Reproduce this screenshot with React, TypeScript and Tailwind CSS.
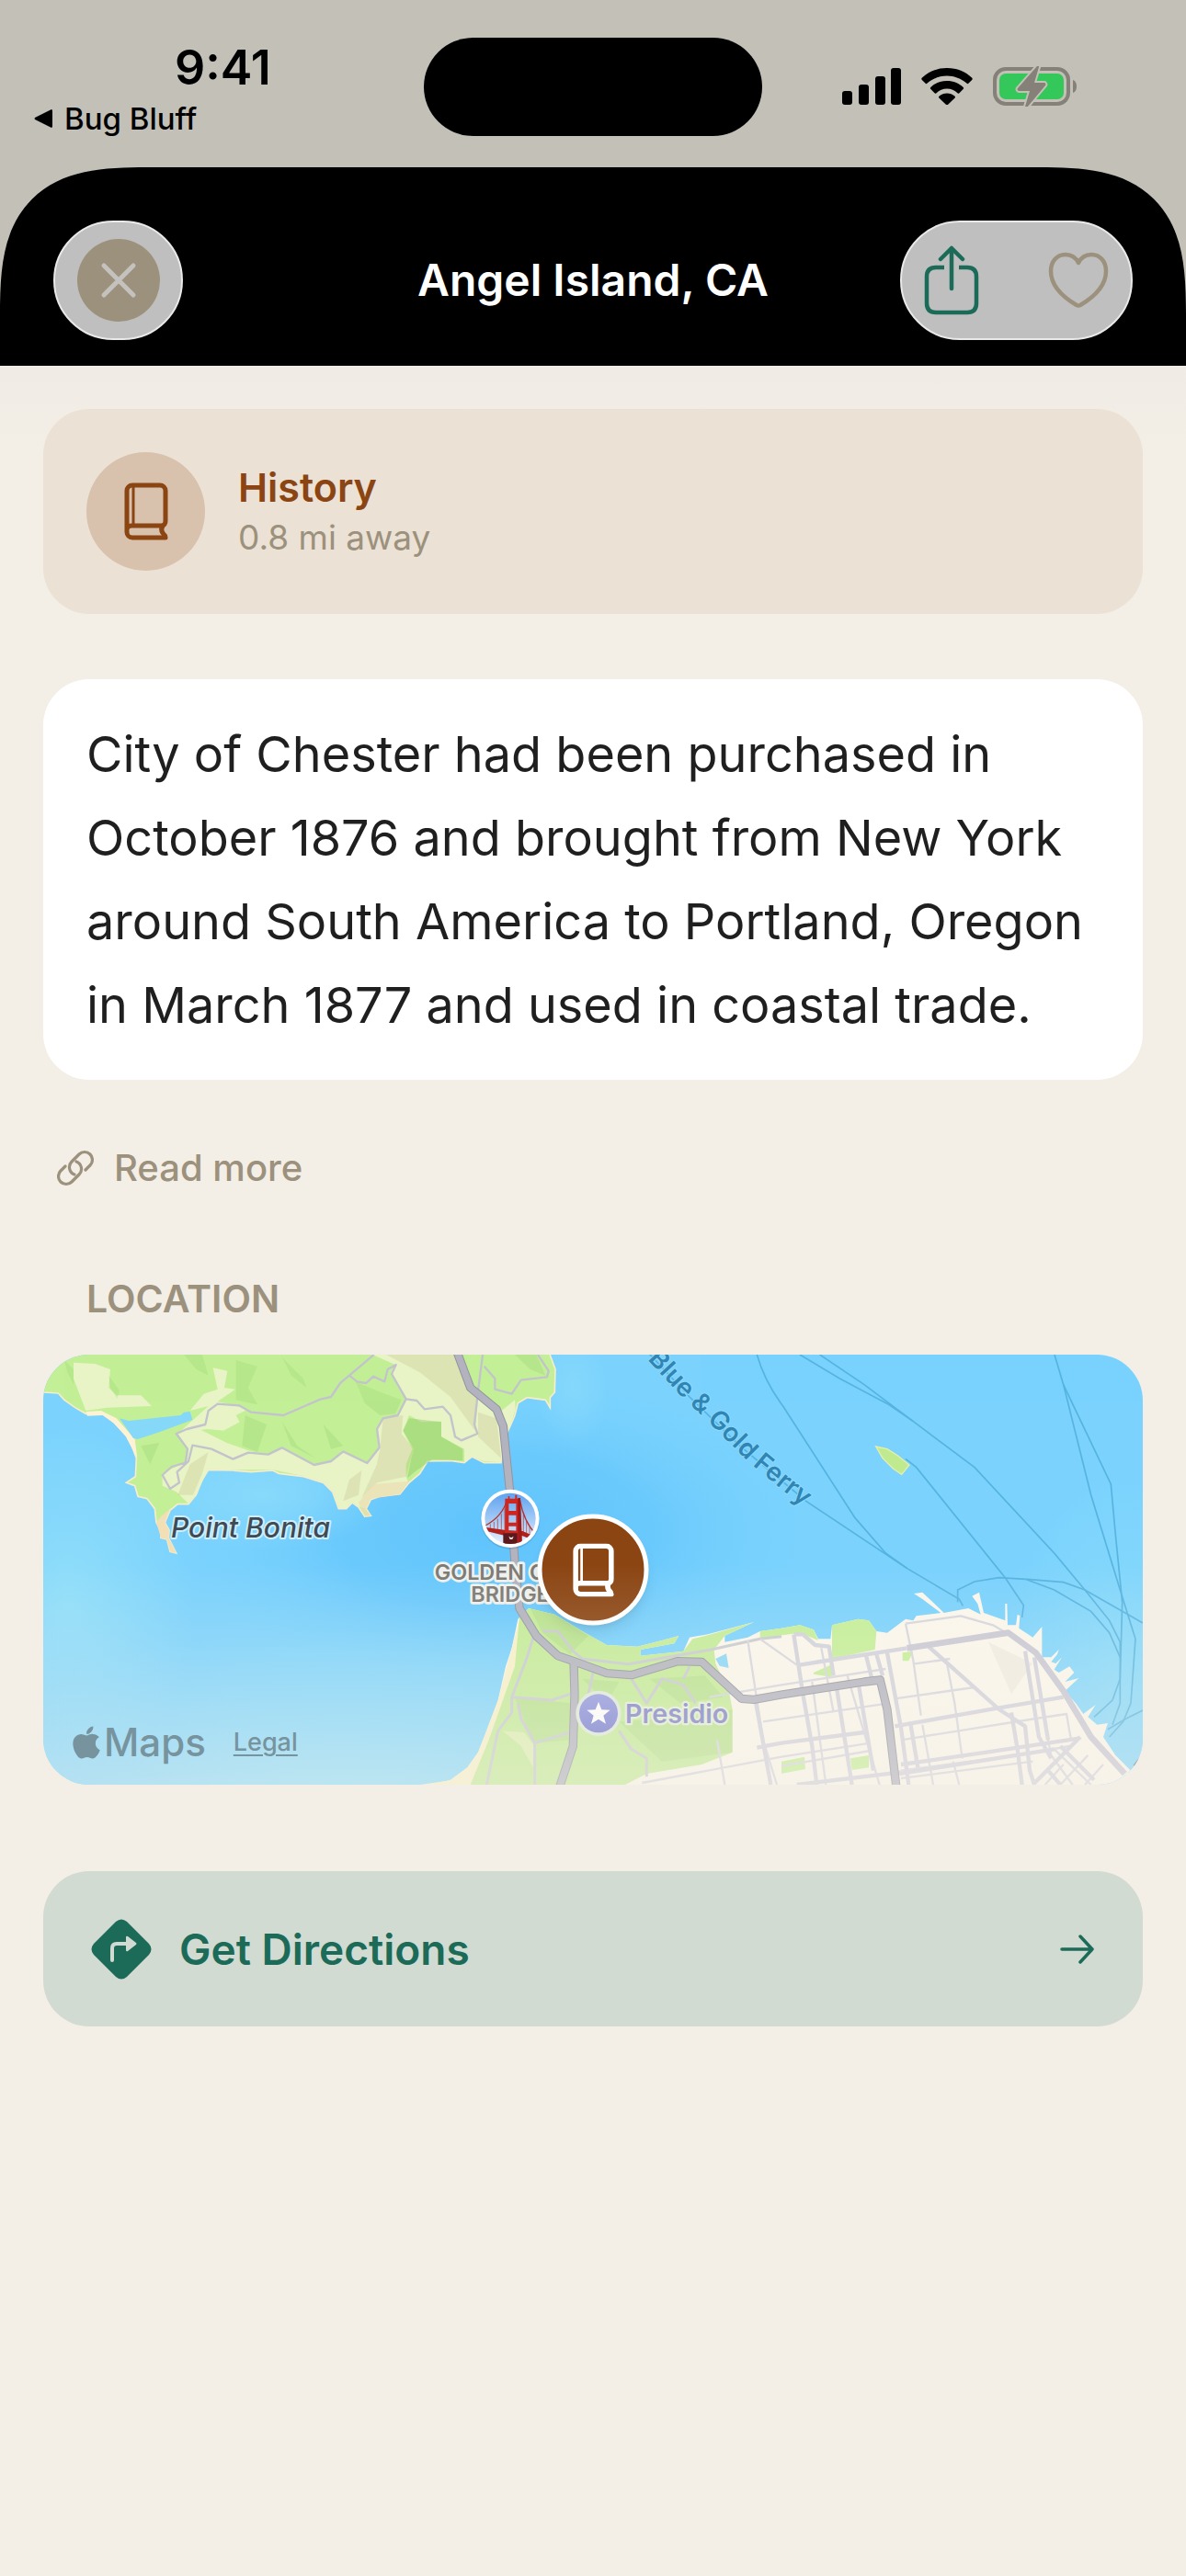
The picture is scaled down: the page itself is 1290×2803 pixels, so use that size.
import type { ReactNode } from "react";
import { FaApple } from "react-icons/fa";

const BookIcon = ({ className }: { className?: string }) => (
  <svg viewBox="0 0 48 63" fill="none" stroke="currentColor" className={className} aria-hidden="true">
    <path
      d="M45 60H9a6 6 0 0 1-6-6V9a6 6 0 0 1 6-6h30a6 6 0 0 1 6 6v33c0 2-1 4-3 5-2 3-2 5 0 8 1 1 3 2 3 5Z"
      strokeLinejoin="round"
    />
    <path d="M3 50c1-2 3-3 5-3h36" />
    <path d="M10 4v42" strokeWidth="3" />
  </svg>
);

const SignalIcon = () => (
  <svg viewBox="0 0 64 40" className="h-10 w-16" aria-hidden="true">
    <rect x="0" y="25" width="11" height="15" rx="3" />
    <rect x="18" y="18" width="11" height="22" rx="3" />
    <rect x="36" y="9" width="11" height="31" rx="3" />
    <rect x="53" y="0" width="11" height="40" rx="3" />
  </svg>
);

const WifiIcon = () => (
  <svg viewBox="0 0 56 40" className="h-10 w-14" aria-hidden="true">
    <path d="M28 0c11 0 20 4 27 10.5 1 1 1 1.5.2 2.4l-3.6 3.7c-.8.8-1.4.7-2.2 0C43.500 11.500 36 8.500 28 8.500s-15.500 3-21.400 8.100c-.8.7-1.4.8-2.2 0L.8 12.9C0 12 0 11.500 1 10.500 8 4 17 0 28 0Z" />
    <path d="M28 14c7 0 13 2.5 17.5 6.8.9.9.9 1.5.1 2.3l-3.9 4c-.8.8-1.4.8-2.2.1C36.500 24.500 32.500 22.500 28 22.500s-8.500 2-11.500 4.700c-.8.7-1.4.7-2.2-.1l-3.9-4c-.8-.8-.8-1.4.1-2.3C15 16.500 21 14 28 14Z" />
    <path d="M28 27.5c3.2 0 6 1.1 8.3 3 .9.8.9 1.5.1 2.3l-7 6.6c-.9.8-1.9.8-2.8 0l-7-6.6c-.8-.8-.8-1.5.1-2.3 2.3-1.9 5.1-3 8.3-3Z" />
  </svg>
);

const BatteryIcon = () => (
  <svg viewBox="0 0 92 44" className="h-11 w-[92px]" aria-hidden="true">
    <rect x="2" y="3" width="80" height="38" rx="12" fill="none" stroke="#858078" strokeWidth="4" />
    <rect x="7" y="8" width="70" height="28" rx="7" fill="#34c759" />
    <path d="M87 15c3 1 4 4 4 7s-1 6-4 7Z" fill="#858078" />
    <path
      d="M48 0 27 24c-1 1 0 3 1 3h12l-5 17c0 2 1 2 2 1l20-24c1-1 0-3-1-3H45l5-17c0-2-1-2-2-1Z"
      fill="#858078"
      stroke="#c3c0b8"
      strokeWidth="4"
      paintOrder="stroke"
    />
  </svg>
);

const ShareIcon = () => (
  <svg viewBox="0 0 60 76" fill="none" stroke="currentColor" className="h-[76px] w-[60px]" strokeWidth="4.5" strokeLinecap="round" strokeLinejoin="round" aria-hidden="true">
    <path d="M30 47V3M18 15 30 3l12 12" />
    <path d="M22 24h-9C6 24 3 28 3 34v29c0 6 3 10 10 10h34c7 0 10-4 10-10V34c0-6-3-10-10-10h-9" strokeLinecap="butt" />
  </svg>
);

const HeartIcon = () => (
  <svg viewBox="0 0 66 62" fill="none" stroke="currentColor" className="h-[62px] w-[66px]" strokeWidth="4.5" strokeLinejoin="round" aria-hidden="true">
    <path d="M33 12C30 6 25 3 19 3 9 3 3 11 3 21c0 14 11 27 28 37q2 1 4 0c17-10 28-23 28-37C63 11 57 3 47 3c-6 0-11 3-14 9Z" />
  </svg>
);

const LinkIcon = () => (
  <svg viewBox="0 0 40 40" fill="none" stroke="currentColor" className="size-10" strokeWidth="3.2" strokeLinecap="round" aria-hidden="true">
    <path d="M9 18 4 23a8.500 8.500 0 0 0 0 12 8.500 8.500 0 0 0 12 0l8-8a8.500 8.500 0 0 0-3-14" />
    <path d="m31 22 5-5a8.500 8.500 0 0 0 0-12 8.500 8.500 0 0 0-12 0l-8 8a8.500 8.500 0 0 0 3 14" />
  </svg>
);

const TurnIcon = () => (
  <svg viewBox="0 0 66 66" className="size-[66px]" aria-hidden="true">
    <path d="M27 3q6-5 12 0l24 24q5 6 0 12L39 63q-6 5-12 0L3 39q-5-6 0-12Z" fill="#1b6b58" />
    <path d="M23 45V32q0-5 5-5h11" fill="none" stroke="#d2dbd1" strokeWidth="4" strokeLinecap="round" />
    <path d="M38 20q0-2 2-1l9 7q1 1 0 2l-9 7q-2 1-2-1Z" fill="#d2dbd1" />
  </svg>
);

const ArrowIcon = () => (
  <svg viewBox="0 0 38 32" fill="none" stroke="#1b6b58" className="h-8 w-[38px]" strokeWidth="3.5" strokeLinecap="round" strokeLinejoin="round" aria-hidden="true">
    <path d="M2 16h33M22 2l13 14-13 14" />
  </svg>
);

const highway =
  "M1370 30 1415 150 1500 220 1522 275 1543 480 1560 720 1575 870 1630 960 1700 1025 1750 1042 1860 1082 1940 1088 2090 1043 2170 1045 2300 1165 2340 1168 2430 1152 2700 1110 2752 1104 2775 1200 2805 1456M1752 1045 1755 1150 1750 1320 1705 1456";

const MapArt = () => (
  <svg viewBox="21 42 3588 1404" preserveAspectRatio="xMidYMid slice" className="absolute inset-0 size-full font-[Inter,sans-serif]" role="img" aria-label="Map of the Golden Gate">
    <defs>
      <radialGradient id="deep">
        <stop offset="0" stopColor="#5fc3fc" />
        <stop offset="0.5" stopColor="#64c6fc" stopOpacity="0.7" />
        <stop offset="1" stopColor="#78d1fd" stopOpacity="0" />
      </radialGradient>
      <radialGradient id="shallow">
        <stop offset="0" stopColor="#90defa" />
        <stop offset="1" stopColor="#90defa" stopOpacity="0" />
      </radialGradient>
      <linearGradient id="sky" x1="0" y1="0" x2="0" y2="1">
        <stop offset="0" stopColor="#5aa0ef" />
        <stop offset="1" stopColor="#e4f0fd" />
      </linearGradient>
      <linearGradient id="park" x1="0" y1="0" x2="0" y2="1">
        <stop offset="0" stopColor="#9299e0" />
        <stop offset="1" stopColor="#6f78cf" />
      </linearGradient>
      <clipPath id="photo">
        <circle cx="1545" cy="577" r="83" />
      </clipPath>
      <path id="ferryLabel" d="M1992 58 2095 170 2185 255 2320 390 2440 490 2580 600" />
    </defs>

    {/* water */}
    <path d="M21 42h3588v1404H21Z" fill="#7ad2fd" />
    <ellipse cx="1500" cy="620" rx="1050" ry="520" fill="url(#deep)" />
    <ellipse cx="100" cy="850" rx="420" ry="600" fill="url(#shallow)" />
    <ellipse cx="740" cy="500" rx="420" ry="180" fill="url(#shallow)" opacity="0.7" />
    <ellipse cx="1000" cy="1500" rx="1400" ry="560" fill="url(#shallow)" />
    <ellipse cx="1750" cy="150" rx="120" ry="200" fill="url(#shallow)" opacity="0.5" />
    <ellipse cx="3550" cy="1100" rx="420" ry="700" fill="url(#shallow)" opacity="0.7" />

    {/* ferry routes */}
    <g fill="none" stroke="#4aa9d6" strokeWidth="5" opacity="0.75">
      <path d="M2350 42Q2375 130 2435 210L2670 575 2770 690 2840 740" />
      <path d="M1990 30 2130 180 2300 345 2510 520 2840 740 3010 840 3022 862" />
      <path d="M2490 42 2620 120 2780 205 2860 260 3060 410 3320 690 3420 810 3500 910 3535 980V1180L3510 1250" />
      <path d="M2555 42 2700 140 2860 260" />
      <path d="M2835 382 2870 410 3160 770 3220 860 3215 900" />
      <path d="M3005 850V810L3060 783 3140 770 3240 776 3350 785 3420 810 3609 918" />
      <path d="M3230 776 3320 810 3440 880 3500 950 3535 1030" />
      <path d="M3321 42 3350 140 3440 500 3535 810 3560 890 3585 970 3570 1180 3545 1240 3500 1290" />
      <path d="M3350 140 3505 465 3520 630 3542 850 3535 1100 3510 1170 3450 1225" />
      <path d="M3609 1203 3555 1230 3495 1265" />
    </g>

    {/* headlands */}
    <path
      d="M21 30V165L70 168 90 190 125 215 160 235H215L255 265 295 310 312 345 325 380 322 440 292 460 320 470 330 505 360 512 385 545 390 590 405 615V640L425 645 435 685 455 690 440 660 430 640 432 615 418 590 435 550 460 530H495L520 500 540 450 560 418 640 420 700 425 770 420 790 430 870 440 935 460 965 490 985 545H1010L1030 525 1050 540 1070 570 1090 568 1075 545 1090 515 1120 505 1185 497 1215 460 1250 430 1275 390 1350 388 1395 395 1420 375 1460 395H1515L1520 330 1545 275 1560 240 1570 200 1600 182 1660 190 1675 215V182L1690 165 1692 90 1670 30Z"
      fill="#c3ef97"
      stroke="#f7eccb"
      strokeWidth="5"
    />
    <g fill="#e8f3c6">
      <path d="M120 68 190 72 240 90 235 150 260 175H340L375 210 230 215 160 225 120 120Z" />
      <path d="M575 85 622 95 612 150 648 155 590 195 690 220 650 240 662 262 610 290 555 285 460 300 560 210 500 225 545 170 590 155Z" />
      <path d="M460 300 530 285 620 330 690 355 750 370 800 345 900 400 960 390 1000 355 1078 395 1115 350 1110 290 1130 250 1180 240 1205 185 1155 100 1170 75 1095 42H1370L1420 150 1510 230 1560 190 1562 220 1545 275 1520 330 1515 393 1460 390 1420 375 1395 393V350L1320 310V260L1255 262 1215 240 1195 290 1225 350 1205 400V440L1212 458 1185 495 1120 503 1090 513 1075 545 1050 538 1030 523 1010 543H987L967 490 937 458 870 438 770 418 640 418 560 416 520 498 495 528 455 490 410 470V430L490 390 495 350Z" />
    </g>
    <g fill="#b3a86f" opacity="0.2">
      <path d="M1130 250 1195 240 1190 300 1230 350 1205 440 1110 460 1060 510 1110 400 1120 350Z" />
      <path d="M1140 42H1370L1410 130 1440 180 1430 290 1350 180 1250 100Z" />
      <path d="M1440 230 1500 250 1515 380 1440 310Z" />
      <path d="M500 400 560 360 540 430 510 500 460 500Z" />
      <path d="M1020 450 1060 420 1050 500 1000 520Z" />
    </g>
    <g fill="#7fbf5a" opacity="0.18">
      <path d="M90 60 120 90V140L100 100Z" />
      <path d="M235 110 270 160 262 185 240 150Z" />
      <path d="M480 42H540L560 110 520 90Z" />
      <path d="M650 60 720 80 690 150 720 205 650 190Z" />
      <path d="M800 50 870 120 880 150 830 110Z" />
      <path d="M680 240 750 270 720 360 670 340Z" />
      <path d="M800 260 850 340 910 380 830 340Z" />
      <path d="M935 270 1000 340 960 350Z" />
      <path d="M1040 130 1110 160 1190 190 1170 235 1120 240 1070 200Z" />
      <path d="M1560 42H1630L1660 110 1610 90Z" />
      <path d="M340 340 400 330 370 400Z" />
    </g>
    <g fill="#7fbf5a" opacity="0.35">
      <path d="M1215 250 1320 262V310L1390 350V388L1290 385 1210 440 1230 350 1195 290Z" />
      <path d="M1225 370 1260 360 1250 410 1210 445Z" />
    </g>
    <path d="M160 228 210 225 260 250 320 318 328 380 312 350 290 308 250 265 215 240 165 242Z" fill="#fdf3d4" />
    <path d="M390 590 405 570 435 545 418 590 432 615 430 640 455 690 435 685 425 645 405 640Z" fill="#f3dfb5" />
    <path d="M1050 525 1100 465 1215 455 1185 497 1090 513 1075 545 1090 568 1070 570Z" fill="#eeddb4" opacity="0.7" />
    <path d="M270 250 300 258 470 240 480 230 500 228 508 255 400 295 330 318 315 315Z" fill="#86d8f9" />

    {/* headland trails */}
    <g fill="none" stroke="#c3c4cb" strokeWidth="7" strokeLinejoin="round">
      <path d="M1100 42 1020 110 990 135 960 180 925 188 805 240 700 230 660 208 590 203 560 225 550 270 490 285 455 300 492 350 485 395 440 408 410 435 435 480 465 460 458 425 495 390 508 338 570 350 640 383 690 362 755 368 800 346 905 402 960 390 1000 358 1078 396 1118 345 1110 285 1130 250 1178 240 1205 187 1158 105 1172 75 1145 90 1135 130 1098 113 1075 135 1045 130 1020 110" />
      <path d="M1205 187 1240 192 1265 220 1325 212 1350 240 1365 310 1385 322 1438 300 1428 270 1440 160 1455 42" />
      <path d="M1460 80 1495 120V155L1550 170 1580 125 1665 115 1670 95 1635 42" />
    </g>

    {/* peninsula */}
    <path
      d="M1280 1446 1350 1430 1405 1390 1440 1340 1465 1280 1505 1170 1530 1060 1550 1000 1570 905 1605 870 1690 890 1780 945 1860 990 1960 995 2040 975 2095 960 2080 985 1970 1005V1025L2110 1010 2130 965 2190 955 2340 915 2245 960V980L2320 965 2360 945 2430 935 2490 925 2535 940 2550 970H2590L2595 925 2680 905 2715 910 2740 945 2775 950 2835 905 2860 910 2870 895 2950 885 2890 840 2862 822 2890 818 2945 870 2960 885 3040 870 3080 890 3070 855 3052 830 3075 818 3090 885 3160 910V855H3166L3168 925H3195L3200 890 3208 895 3205 935 3250 965 3280 930V1030H3310L3335 1005 3330 1020 3310 1045 3325 1050 3345 1030 3320 1070 3335 1080 3370 1060 3385 1080 3355 1110 3400 1098 3355 1140 3390 1180 3415 1215 3455 1185 3430 1225 3460 1250 3495 1245 3480 1290 3520 1350 3570 1400V1460H1280Z"
      fill="#fbf7ec"
    />
    <path d="M1250 1446 1350 1432 1405 1390 1440 1340 1505 1170 1550 1000 1575 905 1580 1000 1540 1130 1500 1240 1425 1446Z" fill="#f8f1c9" />
    <path d="M1575 900 1605 870 1690 890 1780 945 1860 990 1960 995 2040 975 2095 960 2080 985 1970 1005V1025L2110 1010 2140 970 2190 958 2340 915 2245 960 2210 1005 2215 1050 2260 1150 2270 1200V1340L2170 1380 1990 1410 1920 1446H1415L1475 1300 1560 1060Z" fill="#c4ec97" />
    <g fill="#c4ef97">
      <path d="M2360 945 2430 935 2490 925 2535 940 2550 975 2490 950 2360 968Z" />
      <path d="M2595 925 2680 905 2715 910 2740 945 2735 1005 2595 1035Z" />
      <path d="M2535 1080 2590 1055 2595 1095 2535 1085Z" />
      <path d="M2825 1015 2860 1010 2845 1042H2825Z" />
      <path d="M2430 1370 2505 1355 2508 1395 2430 1410Z" />
      <path d="M2655 1360 2715 1350V1390L2660 1398Z" />
    </g>
    <g fill="#8fc46d" opacity="0.2">
      <path d="M1610 870 1690 890 1800 960 1740 1020 1650 950Z" />
      <path d="M1560 1160 1740 1180V1300L1620 1310Z" />
      <path d="M1900 1240 2200 1220 2270 1200V1340L2040 1370Z" />
      <path d="M1780 1100 1900 1110 1860 1180Z" />
      <path d="M2000 1100 2180 1090 2240 1160 2100 1180Z" />
    </g>
    <path d="M2215 1035 2250 1018 2258 1065 2228 1058Z" fill="#8ad8f8" />
    <path d="M1520 1270 1590 1275 1625 1320 1620 1390 1580 1320Z" fill="#e4f0b8" opacity="0.8" />
    <path d="M3105 980 3250 1050 3180 1150Z" fill="#dcd8cb" opacity="0.3" />
    <path d="M3582 1385 3609 1350" stroke="#6d7a80" strokeWidth="10" />

    {/* park roads */}
    <g fill="none" stroke="#c9cbcf" strokeWidth="9" strokeLinejoin="round">
      <path d="M1620 965 1600 1030 1550 1160V1210L1505 1270 1468 1446" />
      <path d="M1650 945 1700 945 1750 1010 1780 1035 1930 1052 2200 1005 2360 970 2430 962" />
      <path d="M1550 1160 1680 1170 1740 1150M1570 1180 1580 1230 1625 1310V1446M1625 1310 1740 1275" />
      <path d="M1815 1080 1800 1150M1940 1100 1990 1180 2040 1100 2110 1120 2150 1180M2110 1100 2130 1060" />
      <path d="M1900 1270 1940 1330 1990 1360 1990 1420" />
    </g>

    {/* city streets */}
    <g fill="none" stroke="#d6d6dd" strokeWidth="7" strokeLinejoin="round">
      <path d="M2320 975 2370 1300 2415 1446M2360 970 2480 1055M2195 1160 2430 1120 2770 1068" />
      <path d="M2370 1240 2780 1180M1975 1440 2430 1355 2720 1310M2430 1385 2720 1335M2220 1300 2245 1446" />
      <path d="M2530 1110 2575 1446M2645 1090 2750 1446M2560 1000 2600 1210" />
      <path d="M2835 920 2860 1040 2885 1220M2970 1050 2995 1180 3020 1360M2800 1165 3060 1128M2860 1052 2980 1035" />
      <path d="M2835 920 3015 895 3120 925 3180 960M2820 1300 3260 1230 3360 1215 3375 1300" />
      <path d="M2820 1400 3200 1350 3370 1320M2820 1425 3250 1370M2890 1250 2925 1446M2990 1370 3010 1446" />
      <path d="M3290 1250 3310 1350 3380 1446M3320 1330 3440 1446M3350 1380 3290 1446M3430 1350 3340 1446M3480 1380 3420 1446" />
    </g>
    <g fill="none" stroke="#d2d2db" strokeWidth="13" strokeLinejoin="round">
      <path d="M2490 1055 2595 1038 2840 1000M2470 955 2500 1150 2530 1320 2545 1446M2470 955H2500L2540 990 2585 995 2600 1090" />
      <path d="M2430 1310 2700 1275M2350 1325 2430 1310M2345 1170 2395 1446M2610 1130 2660 1446M2680 1110 2730 1400" />
      <path d="M2705 1020 2725 1100M2740 1020 2760 1090M2775 1015 2820 1260 2845 1446M2850 1240 2875 1390" />
      <path d="M2800 1255 3140 1195 3350 1160M2820 1380 3100 1340 3400 1295M2815 1410 3320 1330M2480 1446 2820 1405" />
      <path d="M3180 1210 3200 1330 3215 1446M3225 1010 3270 1290 3310 1360M3255 1030 3300 1300" />
      <path d="M2910 995 3140 1200 3225 1255 3240 1400 3255 1446M3405 1290 3250 1446M3300 1400 3340 1446M3340 1320 3450 1430" />
    </g>
    <path d="M2840 1000 3170 950 3260 1015 3350 1140 3440 1290 3550 1410" fill="none" stroke="#c9c8d4" strokeWidth="20" strokeLinejoin="round" />

    {/* highway 101 */}
    <g fill="none" strokeLinejoin="round">
      <path d={highway} stroke="#93949f" strokeWidth="28" />
      <path d={highway} stroke="#b2b3be" strokeWidth="22" />
    </g>

    {/* Alcatraz */}
    <path d="M2738 342 2775 350 2810 372 2847 402 2822 433 2795 415 2760 380Z" fill="#bfea90" stroke="#e6efa8" strokeWidth="4" />

    {/* labels */}
    <g strokeLinejoin="round" paintOrder="stroke">
      <text x="438" y="640" fontSize="90" fontStyle="italic" fontWeight="500" fill="#3f4a55" stroke="#cdeefc" strokeWidth="12">
        Point Bonita
      </text>
      <text fontSize="84" fontWeight="600" fill="#2f86b4" stroke="#8fdafc" strokeWidth="6">
        <textPath href="#ferryLabel">Blue &amp; Gold Ferry</textPath>
      </text>
      <g fontSize="70" fontWeight="600" fill="#7d7a73" stroke="#eef1ee" strokeWidth="16" textAnchor="middle">
        <text x="1545" y="778">GOLDEN GATE</text>
        <text x="1545" y="848">BRIDGE</text>
      </g>
      <text x="1920" y="1245" fontSize="86" fontWeight="600" fill="#7c80c4" stroke="#e3efd8" strokeWidth="14">
        Presidio
      </text>
    </g>

    {/* bridge photo pin */}
    <circle cx="1545" cy="580" r="97" fill="#2c6fa5" opacity="0.25" />
    <circle cx="1545" cy="577" r="95" fill="#fff" />
    <g clipPath="url(#photo)">
      <path d="M1460 490h170v170h-170Z" fill="url(#sky)" />
      <g fill="none" stroke="#b5322c" strokeWidth="4">
        <path d="M1464 600Q1520 570 1535 515M1576 515Q1590 590 1630 630" />
        <path d="M1480 595v20M1492 588v30M1504 578v40M1516 562v60M1527 545v80M1588 565v65M1598 585v50M1608 602v36" strokeWidth="2" />
      </g>
      <path d="M1460 605 1530 615 1585 618 1632 638V652L1585 634 1525 632 1460 616Z" fill="#b3211c" />
      <path d="M1528 512h10v-8h5v8h18v-12h6v12h10l4 150h-54Zm12 16v24h24v-24Zm0 38v24h24v-24Zm0 36v16h24v-16Z" fill="#cf2620" fillRule="evenodd" />
      <path d="M1522 625h46v40h-46Z" fill="#5a1a1c" />
      <path d="M1570 510h8l6 150h-14Z" fill="#a01a18" />
      <path d="m1540 635 8 5 8-5-4 10h-8Z" fill="#f3dfe0" />
    </g>

    {/* park pin */}
    <circle cx="1833" cy="1213" r="74" fill="#dfe9dc" />
    <circle cx="1833" cy="1213" r="63" fill="url(#park)" />
    <path d="m1833 1175 10 26 28 1-22 18 8 27-24-15-24 15 8-27-22-18 28-1Z" fill="#fff" />
  </svg>
);

const StatusBar = () => (
  <div className="flex h-[182px] items-start justify-between">
    <div className="flex w-[400px] flex-col pl-9 pt-[44px]">
      <time className="pl-[154px] text-[52px]/[60px] font-semibold">9:41</time>
      <a href="#bug-bluff" className="mt-1 flex items-center gap-3 text-[33px]/[42px] font-medium">
        <svg viewBox="0 0 22 22" className="size-[22px]" aria-hidden="true">
          <path d="M20 1q1 0 1 2v16q0 2-1 2L2 12q-1-1 0-2Z" />
        </svg>
        Bug Bluff
      </a>
    </div>
    <div className="mt-[41px] h-[107px] w-[368px] rounded-full bg-black" />
    <div className="flex w-[400px] items-center gap-[22px] pl-[26px] pt-[72px]">
      <SignalIcon />
      <WifiIcon />
      <BatteryIcon />
    </div>
  </div>
);

const glass = "flex h-[130px] items-center rounded-full border-2 border-[#e9e9e9] bg-[#bfbfbf]";

const SheetHeader = () => (
  <header className="grid h-[216px] grid-cols-[1fr_auto_1fr] items-center rounded-t-[160px] bg-black px-[58px] pt-[30px] [corner-shape:superellipse(1.5)]">
    <button type="button" aria-label="Close" className={`${glass} w-[141px] justify-center`}>
      <span className="flex size-[90px] items-center justify-center rounded-full bg-[#9c917c]">
        <svg viewBox="0 0 40 40" className="size-10" stroke="#c4c2be" strokeWidth="5" strokeLinecap="round" aria-hidden="true">
          <path d="m4 4 32 32M36 4 4 36" />
        </svg>
      </span>
    </button>
    <h1 className="text-[48px]/[60px] font-semibold text-white">Angel Island, CA</h1>
    <div className={`${glass} w-[253px] justify-between justify-self-end px-6`}>
      <button type="button" aria-label="Share" className="text-[#1b6b58]">
        <ShareIcon />
      </button>
      <button type="button" aria-label="Save" className="text-[#9c917c]">
        <HeartIcon />
      </button>
    </div>
  </header>
);

const Card = ({ className, children }: { className: string; children: ReactNode }) => (
  <section className={`rounded-[50px] px-[47px] ${className}`}>{children}</section>
);

const LocationMap = () => (
  <div className="relative h-[468px] overflow-hidden rounded-[50px]">
    <MapArt />
    <div className="absolute left-1/2 top-1/2 flex size-[121px] -translate-x-1/2 -translate-y-1/2 items-center justify-center rounded-full border-[5px] border-white bg-[#8b4513] text-white shadow-lg">
      <BookIcon className="h-[58px] w-[46px] stroke-6" />
    </div>
    <div className="absolute inset-x-0 bottom-0 h-[240px] bg-linear-to-b from-[#f3eee6]/0 to-[#f3eee6]/45" />
    <div className="absolute bottom-5 left-8 flex items-center text-[#76939e]">
      <span className="flex items-center text-[42px]/[52px] font-medium">
        <FaApple className="mr-1 h-10 w-[30px]" aria-hidden="true" />
        Maps
      </span>
      <a href="#legal" className="ml-[30px] text-[27px]/[32px] font-medium underline underline-offset-4">
        Legal
      </a>
    </div>
  </div>
);

const App = () => (
  <div className="min-h-screen bg-[#f3eee6] font-[Inter,sans-serif] text-black">
    <div className="bg-[#c3c0b8]">
      <StatusBar />
      <SheetHeader />
    </div>

    <main className="bg-linear-to-b from-[#f0ece5] to-[#f3eee6] to-5% px-[47px] pb-12 pt-[47px]">
      <Card className="flex items-center gap-9 bg-[#ebe1d5] py-[47px]">
        <div className="flex size-[129px] items-center justify-center rounded-full bg-[#d8c1ad] text-[#8b4513]">
          <BookIcon className="h-[63px] w-12 stroke-5" />
        </div>
        <div>
          <h2 className="text-[43px]/[56px] font-semibold text-[#8b4513]">History</h2>
          <p className="text-[37px]/[54px] text-[#9c917c]">0.8 mi away</p>
        </div>
      </Card>

      <Card className="mt-[71px] bg-white py-9">
        <p className="text-[54px]/[91px] text-[#1f1f1f]">
          City of Chester had been purchased in October 1876 and brought from New York around South America to Portland, Oregon in March 1877 and used in coastal trade.
        </p>
      </Card>

      <a href="#read-more" className="mt-[71px] ml-[15px] flex w-fit items-center gap-[22px] text-[40px]/[50px] font-medium text-[#9c917c]">
        <LinkIcon />
        Read more
      </a>

      <h3 className="mt-[92px] ml-[47px] text-[41px]/[50px] font-semibold text-[#9c917c]">LOCATION</h3>
      <div className="mt-9">
        <LocationMap />
      </div>

      <button type="button" className="mt-[94px] flex h-[169px] w-full items-center rounded-[50px] bg-[#d2dbd1] px-[52px] text-[#1b6b58]">
        <TurnIcon />
        <span className="ml-[30px] mr-auto text-[46px]/[60px] font-semibold">Get Directions</span>
        <ArrowIcon />
      </button>
    </main>
  </div>
);

export default App;
